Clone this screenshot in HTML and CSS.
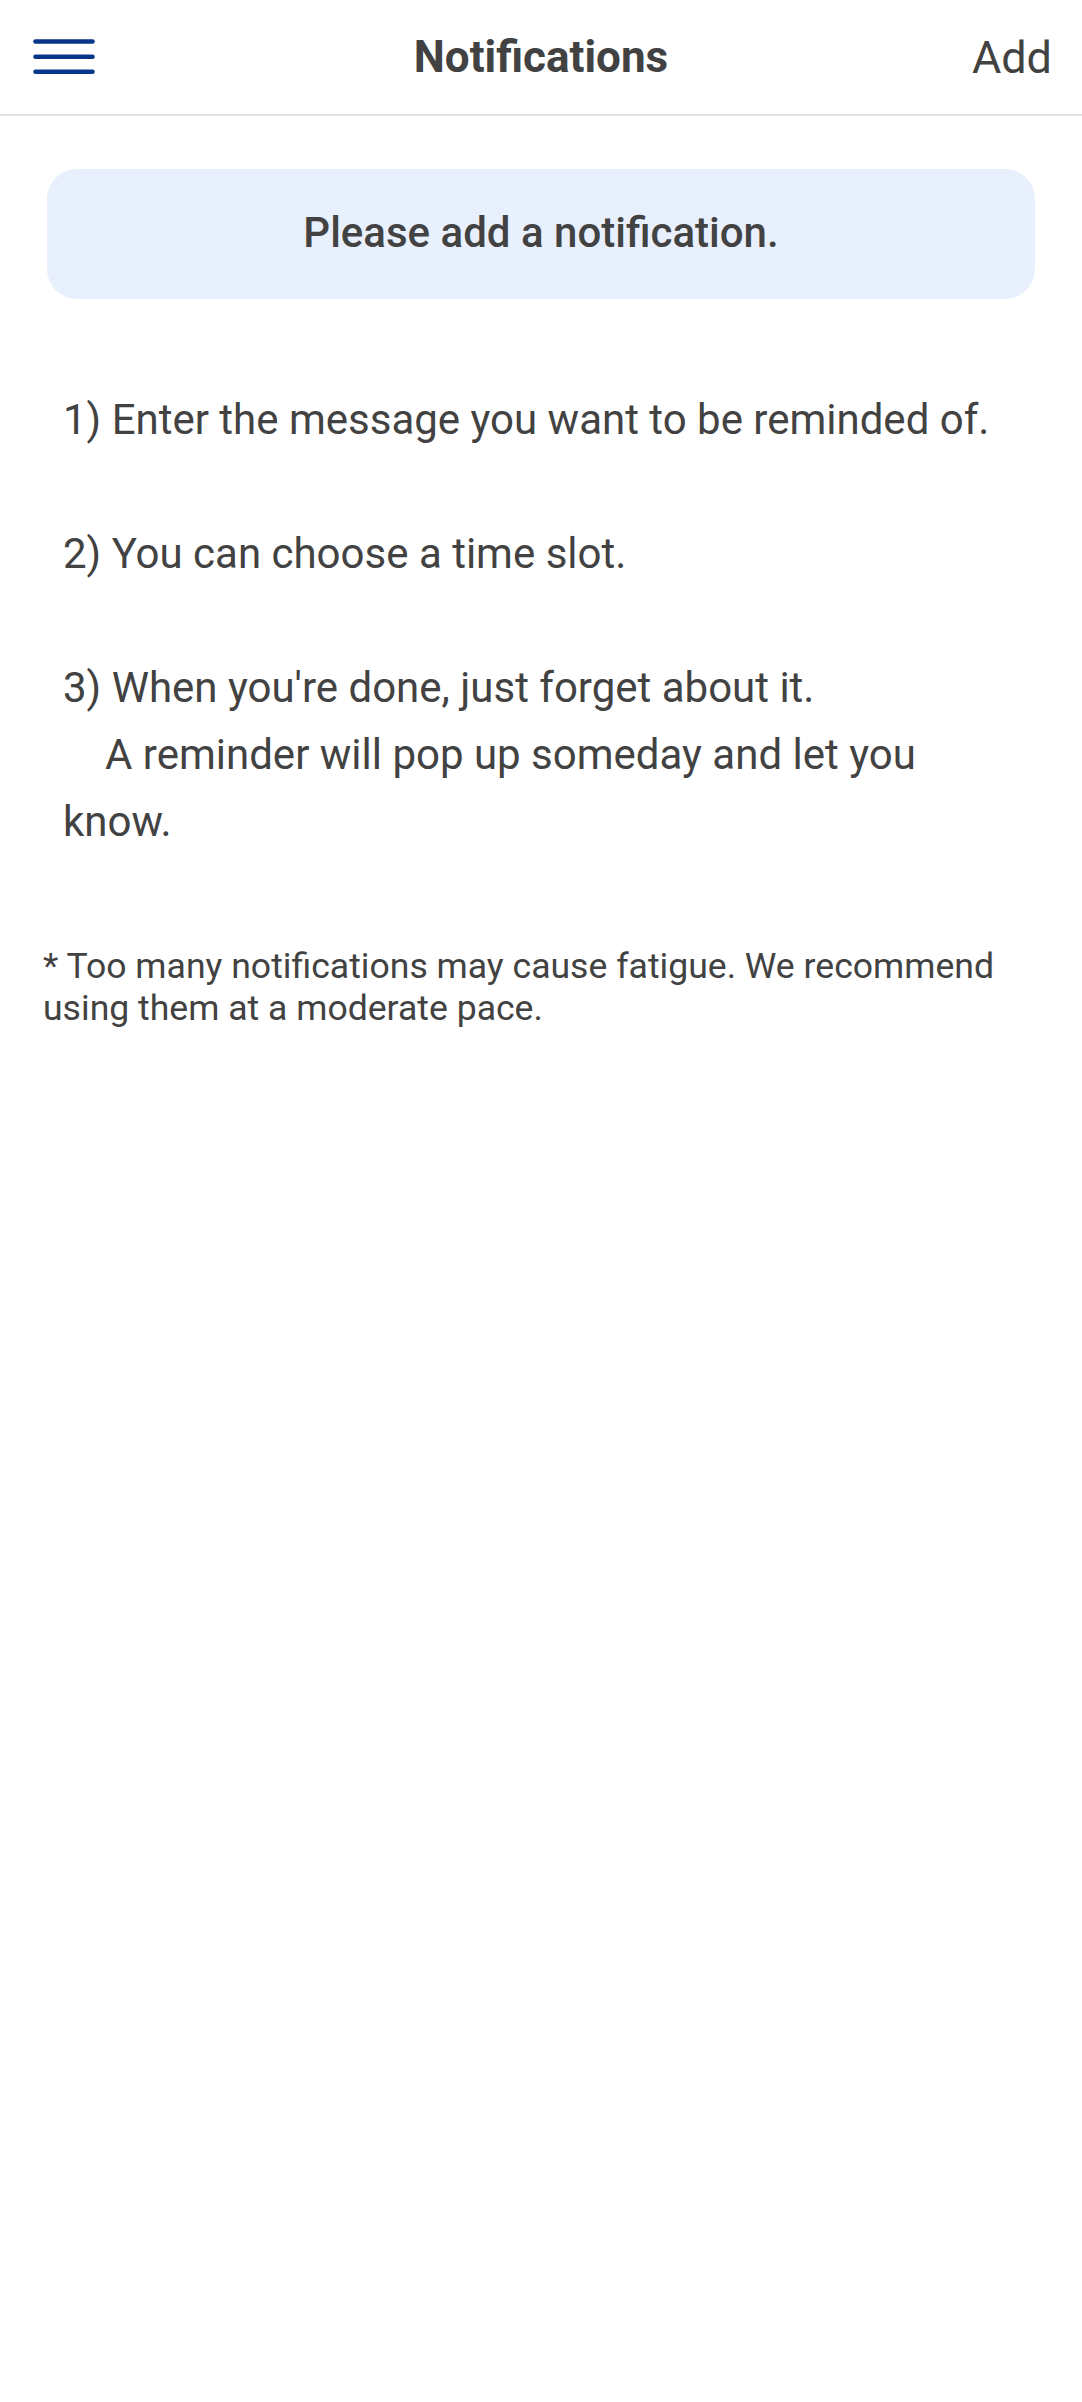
FILE: index.html
```html
<!DOCTYPE html>
<html lang="en">
<head>
<meta charset="utf-8">
<title>Notifications</title>
<link rel="stylesheet" href="styles.css">
</head>
<body>
<header class="topbar">
  <button class="menu" aria-label="Menu">
    <svg width="62" height="36" viewBox="0 0 62 36">
      <line x1="2.5" y1="2.5" x2="59.5" y2="2.5" />
      <line x1="2.5" y1="17.8" x2="59.5" y2="17.8" />
      <line x1="2.5" y1="32.8" x2="59.5" y2="32.8" />
    </svg>
  </button>
  <h1 class="title">Notifications</h1>
  <span class="add">Add</span>
</header>
<main class="content">
  <div class="banner">Please add a notification.</div>
  <ol class="steps">
    <li>1) Enter the message you want to be reminded of.</li>
    <li>2) You can choose a time slot.</li>
    <li>3) When you're done, just forget about it.<br><span class="indent"></span>A reminder will pop up someday and let you know.</li>
  </ol>
  <p class="note">* Too many notifications may cause fatigue. We recommend using them at a moderate pace.</p>
</main>
</body>
</html>
```
FILE: styles.css
```css
html, body {
  margin: 0;
  padding: 0;
  background: #ffffff;
}
body {
  font-family: Roboto, "Noto Sans", "Liberation Sans", sans-serif;
  color: #424242;
  width: 1082px;
}
.topbar {
  height: 114px;
  border-bottom: 2px solid #e0e0e0;
  display: flex;
  align-items: center;
  justify-content: space-between;
  padding: 0 30px 0 33px;
  position: relative;
}
.menu {
  background: none;
  border: 0;
  padding: 0;
  width: 62px;
  height: 36px;
  display: flex;
}
.menu line {
  stroke: #06358a;
  stroke-width: 4.6;
  stroke-linecap: round;
}
.title {
  margin: 0;
  font-size: 44px;
  font-weight: 700;
  color: #424242;
  position: absolute;
  left: 0;
  right: 0;
  text-align: center;
  pointer-events: none;
}
.add {
  font-size: 45px;
  font-weight: 400;
  color: #424242;
}
.content {
  padding: 53px 47px 0 47px;
}
.banner {
  height: 130px;
  box-sizing: border-box;
  padding-bottom: 4px;
  background: #e8f0fd;
  border-radius: 30px;
  display: flex;
  align-items: center;
  justify-content: center;
  font-size: 42px;
  font-weight: 500;
  color: #424242;
}
.steps {
  list-style: none;
  margin: 87px 0 0 0;
  padding: 0 20px 0 16px;
  font-size: 42px;
  line-height: 67px;
}
.steps li + li {
  margin-top: 67px;
}
.indent {
  display: inline-block;
  width: 42px;
}
.note {
  margin: 90px 0 0 -4px;
  font-size: 35.6px;
  line-height: 42px;
}
```
